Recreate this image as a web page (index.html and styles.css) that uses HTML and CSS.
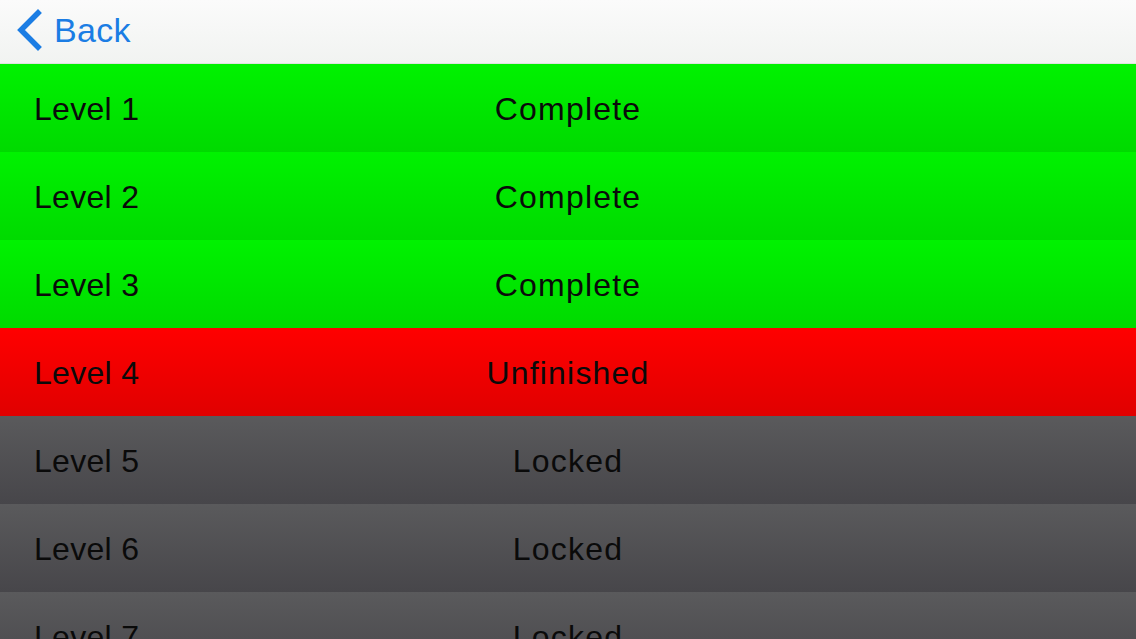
FILE: index.html
```html
<!DOCTYPE html>
<html lang="en">
<head>
    <meta charset="UTF-8">
    <title>Levels</title>
    <link rel="stylesheet" href="styles.css">
</head>
<body>
    <div class="nav-bar">
        <a class="back" href="#">
            <svg class="chevron" width="26" height="42" viewBox="0 0 26 42">
                <path d="M22 4 L5 21 L22 38" fill="none" stroke="#1b7de4" stroke-width="5.5" stroke-linecap="square"/>
            </svg>
            <span>Back</span>
        </a>
    </div>
    <div class="level-list">
        <div class="level complete"><span class="name">Level 1</span><span class="status">Complete</span></div>
        <div class="level complete"><span class="name">Level 2</span><span class="status">Complete</span></div>
        <div class="level complete"><span class="name">Level 3</span><span class="status">Complete</span></div>
        <div class="level unfinished"><span class="name">Level 4</span><span class="status">Unfinished</span></div>
        <div class="level locked"><span class="name">Level 5</span><span class="status">Locked</span></div>
        <div class="level locked"><span class="name">Level 6</span><span class="status">Locked</span></div>
        <div class="level locked"><span class="name">Level 7</span><span class="status">Locked</span></div>
    </div>
</body>
</html>
```

FILE: styles.css
```css
html, body {
    margin: 0;
    padding: 0;
}
body {
    font-family: "Liberation Sans", Arial, sans-serif;
    width: 1136px;
    height: 639px;
    overflow: hidden;
    background: #f7f7f7;
}
.nav-bar {
    height: 63px;
    background: linear-gradient(#fbfbfb, #f1f3f1);
    border-bottom: 1px solid #dfe3df;
    display: flex;
    align-items: center;
}
.back {
    display: flex;
    align-items: center;
    gap: 12px;
    margin-left: 16px;
    margin-top: -4px;
    color: #1b7de4;
    text-decoration: none;
    font-size: 34px;
    letter-spacing: 0.3px;
}
.back span {
    margin-top: 1px;
}
.level {
    height: 88px;
    box-sizing: border-box;
    padding-top: 3px;
    display: grid;
    grid-template-columns: 1fr auto 1fr;
    align-items: center;
    font-size: 32px;
    letter-spacing: 0.8px;
    color: #0a0a0a;
}
.level .name {
    padding-left: 34px;
    letter-spacing: 0.3px;
}
.level .status {
    letter-spacing: 1.2px;
}
.complete {
    background: linear-gradient(#00f200, #00da00);
}
.unfinished {
    background: linear-gradient(#ff0000, #e00000);
}
.locked {
    background: linear-gradient(#5a5a5c, #47464a);
}
```
